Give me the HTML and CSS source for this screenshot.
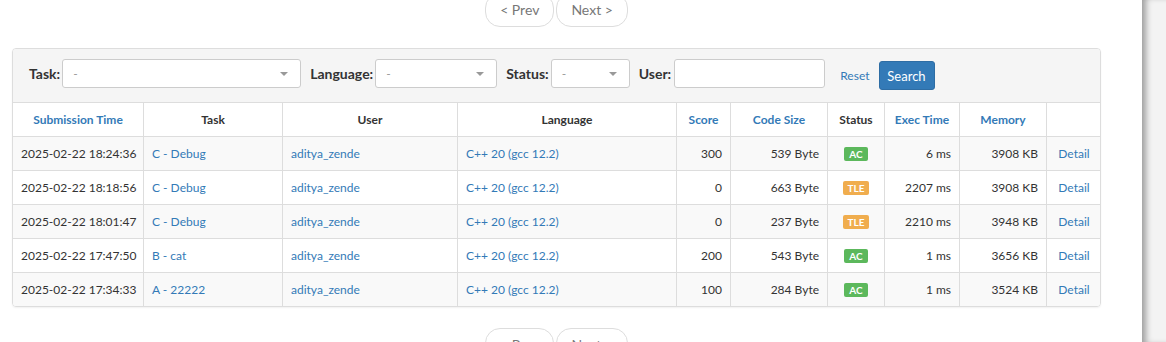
FILE: index.html
```html
<!DOCTYPE html>
<html lang="en">
<head>
    <meta charset="UTF-8">
    <title>Submissions</title>
    <link rel="stylesheet" href="styles.css">
</head>
<body>
    <div class="page">
        <div class="pager pager-top">
            <a class="pager-btn">&lt; Prev</a>
            <a class="pager-btn">Next &gt;</a>
        </div>

        <div class="panel">
            <div class="filters">
                <label class="filter-label">Task:</label>
                <div class="select select-task"><span>-</span><i class="caret"></i></div>
                <label class="filter-label">Language:</label>
                <div class="select select-lang"><span>-</span><i class="caret"></i></div>
                <label class="filter-label">Status:</label>
                <div class="select select-status"><span>-</span><i class="caret"></i></div>
                <label class="filter-label label-user">User:</label>
                <input type="text" class="user-input">
                <a class="reset">Reset</a>
                <button class="search">Search</button>
            </div>

            <table class="subs">
                <colgroup>
                    <col style="width:131px">
                    <col style="width:139px">
                    <col style="width:175px">
                    <col style="width:219px">
                    <col style="width:54px">
                    <col style="width:97px">
                    <col style="width:57px">
                    <col style="width:75px">
                    <col style="width:87px">
                    <col style="width:55px">
                </colgroup>
                <thead>
                    <tr>
                        <th><a>Submission Time</a></th>
                        <th>Task</th>
                        <th>User</th>
                        <th>Language</th>
                        <th><a>Score</a></th>
                        <th><a>Code Size</a></th>
                        <th>Status</th>
                        <th><a>Exec Time</a></th>
                        <th><a>Memory</a></th>
                        <th></th>
                    </tr>
                </thead>
                <tbody>
                    <tr>
                        <td>2025-02-22 18:24:36</td>
                        <td><a>C - Debug</a></td>
                        <td><a>aditya_zende</a></td>
                        <td><a>C++ 20 (gcc 12.2)</a></td>
                        <td class="num">300</td>
                        <td class="num">539 Byte</td>
                        <td class="center"><span class="badge ac">AC</span></td>
                        <td class="num">6 ms</td>
                        <td class="num">3908 KB</td>
                        <td class="center"><a>Detail</a></td>
                    </tr>
                    <tr>
                        <td>2025-02-22 18:18:56</td>
                        <td><a>C - Debug</a></td>
                        <td><a>aditya_zende</a></td>
                        <td><a>C++ 20 (gcc 12.2)</a></td>
                        <td class="num">0</td>
                        <td class="num">663 Byte</td>
                        <td class="center"><span class="badge tle">TLE</span></td>
                        <td class="num">2207 ms</td>
                        <td class="num">3908 KB</td>
                        <td class="center"><a>Detail</a></td>
                    </tr>
                    <tr>
                        <td>2025-02-22 18:01:47</td>
                        <td><a>C - Debug</a></td>
                        <td><a>aditya_zende</a></td>
                        <td><a>C++ 20 (gcc 12.2)</a></td>
                        <td class="num">0</td>
                        <td class="num">237 Byte</td>
                        <td class="center"><span class="badge tle">TLE</span></td>
                        <td class="num">2210 ms</td>
                        <td class="num">3948 KB</td>
                        <td class="center"><a>Detail</a></td>
                    </tr>
                    <tr>
                        <td>2025-02-22 17:47:50</td>
                        <td><a>B - cat</a></td>
                        <td><a>aditya_zende</a></td>
                        <td><a>C++ 20 (gcc 12.2)</a></td>
                        <td class="num">200</td>
                        <td class="num">543 Byte</td>
                        <td class="center"><span class="badge ac">AC</span></td>
                        <td class="num">1 ms</td>
                        <td class="num">3656 KB</td>
                        <td class="center"><a>Detail</a></td>
                    </tr>
                    <tr>
                        <td>2025-02-22 17:34:33</td>
                        <td><a>A - 22222</a></td>
                        <td><a>aditya_zende</a></td>
                        <td><a>C++ 20 (gcc 12.2)</a></td>
                        <td class="num">100</td>
                        <td class="num">284 Byte</td>
                        <td class="center"><span class="badge ac">AC</span></td>
                        <td class="num">1 ms</td>
                        <td class="num">3524 KB</td>
                        <td class="center"><a>Detail</a></td>
                    </tr>
                </tbody>
            </table>
        </div>

        <div class="pager pager-bottom">
            <a class="pager-btn">&lt; Prev</a>
            <a class="pager-btn">Next &gt;</a>
        </div>
    </div>
    <div class="side"></div>
</body>
</html>
```

FILE: styles.css
```css
html, body {
    margin: 0;
    height: 100%;
}
body {
    font-family: Lato, "Open Sans", sans-serif;
    font-size: 13px;
    color: #333;
    background-color: #f3f3f3;
    display: flex;
    overflow: hidden;
}
a {
    color: #337ab7;
    text-decoration: none;
}
.page {
    width: 1130px;
    flex-shrink: 0;
    padding-left: 12px;
    background-color: #fff;
}
.side {
    flex-grow: 1;
    box-shadow: inset 7px 0 6px -3px rgba(0, 0, 0, 0.35);
}

/* pagination */
.pager {
    width: 1089px;
    display: flex;
    justify-content: center;
    gap: 2px;
}
.pager-top {
    margin-top: -7px;
    margin-bottom: 21px;
}
.pager-bottom {
    margin-top: 21px;
}
.pager-btn {
    display: block;
    padding: 6px 14px;
    line-height: 20px;
    font-size: 14px;
    color: #777;
    border: 1px solid #ddd;
    border-radius: 15px;
    background-color: #fff;
}

/* panel */
.panel {
    width: 1087px;
    border: 1px solid #ddd;
    border-radius: 4px;
    overflow: hidden;
    box-shadow: 0 1px 2px rgba(0, 0, 0, 0.06);
}
.filters {
    display: flex;
    align-items: flex-start;
    height: 29px;
    padding: 10px 15px 14px;
    background-color: #f5f5f5;
}
.filter-label {
    font-size: 14px;
    font-weight: bold;
    line-height: 29px;
    margin-right: 2px;
    padding-left: 1px;
}
.label-user {
    margin-right: 3px;
}
.select {
    position: relative;
    box-sizing: border-box;
    height: 29px;
    margin-right: 8px;
    padding: 0 10px;
    line-height: 27px;
    font-size: 12px;
    color: #999;
    background-color: #fff;
    border: 1px solid #ccc;
    border-radius: 3px;
}
.select-task { width: 239px; }
.select-lang { width: 122px; }
.select-status { width: 79px; }
.caret {
    position: absolute;
    right: 12px;
    top: 12px;
    border-left: 4px solid transparent;
    border-right: 4px solid transparent;
    border-top: 4px solid #999;
}
.user-input {
    box-sizing: border-box;
    width: 151px;
    height: 29px;
    margin: 0;
    border: 1px solid #ccc;
    border-radius: 3px;
}
.reset {
    margin-left: 15px;
    margin-top: 2px;
    line-height: 29px;
    font-size: 12px;
}
.search {
    margin-left: 9px;
    margin-top: 2px;
    width: 56px;
    height: 29px;
    padding: 0;
    font-family: Lato, sans-serif;
    font-size: 13px;
    color: #fff;
    background-color: #337ab7;
    border: 1px solid #2e6da4;
    border-radius: 3px;
}

/* table */
.subs {
    width: 1089px;
    table-layout: fixed;
    border-collapse: collapse;
    margin: 0 -1px -1px;
}
.subs th, .subs td {
    border: 1px solid #ddd;
    padding: 8px;
    line-height: 17px;
    white-space: nowrap;
    overflow: hidden;
}
.subs th {
    font-size: 12px;
    text-align: center;
    background-color: #fff;
}
.subs td {
    font-size: 12px;
}
.subs tbody tr:nth-child(odd) {
    background-color: #f9f9f9;
}
.subs td.num {
    text-align: right;
}
.subs td.center {
    text-align: center;
}
.badge {
    display: inline-block;
    padding: 0 5px;
    line-height: 14px;
    font-size: 10px;
    font-weight: bold;
    color: #fff;
    border-radius: 2px;
    vertical-align: 0;
}
.badge.ac { background-color: #5cb85c; }
.badge.tle { background-color: #f0ad4e; }
```
